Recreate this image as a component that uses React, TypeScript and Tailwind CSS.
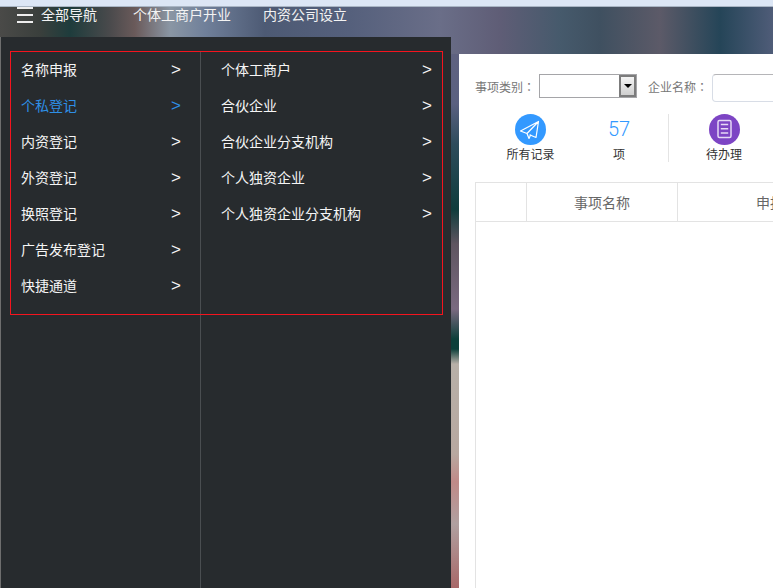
const primaryItems = [
  { label: "名称申报" },
  { label: "个私登记", active: true },
  { label: "内资登记" },
  { label: "外资登记" },
  { label: "换照登记" },
  { label: "广告发布登记" },
  { label: "快捷通道" },
];

const secondaryItems = ["个体工商户", "合伙企业", "合伙企业分支机构", "个人独资企业", "个人独资企业分支机构"];

function MenuRow({ label, active = false }: { label: string; active?: boolean }) {
  return (
    <div className={`flex h-9 items-center justify-between pl-5 pr-[19px] ${active ? "text-[#2e8fe6]" : "text-[#f5f5f5]"}`}>
      <span className="text-sm">{label}</span>
      <span className="text-[17px] leading-none font-['Liberation_Sans',sans-serif]">&gt;</span>
    </div>
  );
}

function FieldLabel({ children }: { children: string }) {
  return (
    <span className="flex w-16 leading-[26px]">
      {children}
      <span className="font-['Noto_Sans_CJK_TC',sans-serif]">：</span>
    </span>
  );
}

function PaperPlane() {
  return (
    <svg viewBox="0 0 31 31" className="h-[31px] w-[31px] shrink-0">
      <circle cx="15.500" cy="15.500" r="15.500" fill="#3399ff" />
      <path
        d="M23.500 7.500 5.500 17l6.500 2.500 11.500-12L21 23.500l-6.500-2.700M12 19.500l2 5 1.800-4"
        fill="none"
        stroke="#fff"
        strokeWidth="1.200"
        strokeLinejoin="round"
      />
    </svg>
  );
}

function DocIcon() {
  return (
    <svg viewBox="0 0 31 31" className="h-[31px] w-[31px] shrink-0">
      <circle cx="15.500" cy="15.500" r="15.500" fill="#7d45c4" />
      <rect x="9" y="6.500" width="13" height="17" rx="1.500" fill="none" stroke="#e6d9f5" strokeWidth="1.500" />
      <path d="M11.800 10.500h7.400M11.800 14.800h7.400M11.800 19h7.400" stroke="#e6d9f5" strokeWidth="1.400" />
    </svg>
  );
}

export default function App() {
  return (
    <div className="relative flex h-[588px] w-[773px] flex-col overflow-hidden font-['Noto_Sans_CJK_SC','Liberation_Sans',sans-serif]">
      <div className="h-[6px] shrink-0 bg-[#dce6f5]" />
      <div className="h-px shrink-0 bg-[#a9b5c4]" />

      <header className="h-[47px] shrink-0 bg-[linear-gradient(90deg,#4a4a48_0px,#3a3f3c_40px,#1e3c3c_70px,#4a4a4c_110px,#6a5a5a_135px,#8a96a4_170px,#70809a_205px,#4d5a74_265px,#55607c_350px,#6a6e88_440px,#5f5d76_500px,#465a6c_560px,#3f5060_600px,#5c5a68_660px,#254558_720px,#4f5c78_773px)]">
        <nav className="flex h-[14px] items-center text-sm text-[#f3f3f3]">
          <div className="ml-[17px] flex w-[116px] items-center gap-2">
            <span className="mt-[2px] flex w-4 flex-col gap-[5px]">
              <span className="h-0.5 bg-[#eee]" />
              <span className="h-0.5 bg-[#eee]" />
              <span className="h-0.5 bg-[#eee]" />
            </span>
            <span>全部导航</span>
          </div>
          <span className="w-[130px]">个体工商户开业</span>
          <span>内资公司设立</span>
        </nav>
      </header>

      <div className="min-h-0 flex-1 bg-[linear-gradient(180deg,#5f6280_0px,#5a6080_50px,#2e4c5c_90px,#0f3c3c_155px,#5f5560_190px,#7a6a80_255px,#0d3f3a_285px,#0d3f3a_295px,#b8b0a8_310px,#b8a8a0_400px,#c08a88_428px,#b0a0a0_470px,#a86868_534px)] pl-[459px]">
        <main className="h-full w-[420px] bg-white pl-4 pt-5">
          <div className="flex h-7 items-start text-xs text-[#777]">
            <FieldLabel>事项类别</FieldLabel>
            <div className="flex h-6 w-[98px] justify-end border border-[#a5a5a8] bg-white">
              <span className="flex w-[17px] items-center justify-center border-2 border-[#7c7c7c] bg-gradient-to-b from-[#f4f4f4] to-[#cfcfcf]">
                <span className="h-0 w-0 border-x-[4px] border-t-[4px] border-x-transparent border-t-black" />
              </span>
            </div>
            <span className="w-[11px]" />
            <FieldLabel>企业名称</FieldLabel>
            <div className="h-7 w-[120px] rounded-sm border border-[#d8dde6] border-t-[#b5b5b8] bg-white" />
          </div>

          <div className="mt-3 flex h-12 items-stretch text-xs text-[#333]">
            <div className="flex w-[111px] flex-col items-center">
              <PaperPlane />
              <span className="mt-px leading-4">所有记录</span>
            </div>
            <div className="flex w-[66px] flex-col items-center">
              <span className="h-[31px] text-xl leading-[31px] text-[#3399ff] font-['Roboto',sans-serif] font-light">57</span>
              <span className="mt-px leading-4">项</span>
            </div>
            <div className="ml-4 w-px bg-[#e4e4e4]" />
            <div className="ml-[37px] flex flex-col items-center">
              <DocIcon />
              <span className="mt-px leading-4">待办理</span>
            </div>
          </div>

          <div className="mt-5 h-[600px] border border-[#e3e3e3] text-sm text-[#666]">
            <div className="flex h-[39px] border-b border-[#e3e3e3]">
              <div className="w-[51px] border-r border-[#e3e3e3]" />
              <div className="flex w-[151px] items-center justify-center border-r border-[#e3e3e3]">事项名称</div>
              <div className="flex-1 pl-[78px] leading-[38px]">申报</div>
            </div>
          </div>
        </main>
      </div>

      <div className="absolute left-0 top-[37px] flex h-[551px] w-[451px] border-l border-[#6e6e6e] bg-[#272b2e] pt-[14px]">
        <div className="w-[200px] border-r border-[#4a4e51]">
          {primaryItems.map((item) => (
            <MenuRow key={item.label} label={item.label} active={item.active} />
          ))}
        </div>
        <div className="flex-1">
          {secondaryItems.map((label) => (
            <MenuRow key={label} label={label} />
          ))}
        </div>
        <div className="pointer-events-none absolute left-[9px] top-[14px] h-[264px] w-[433px] border border-[#f5141e]" />
      </div>
    </div>
  );
}
